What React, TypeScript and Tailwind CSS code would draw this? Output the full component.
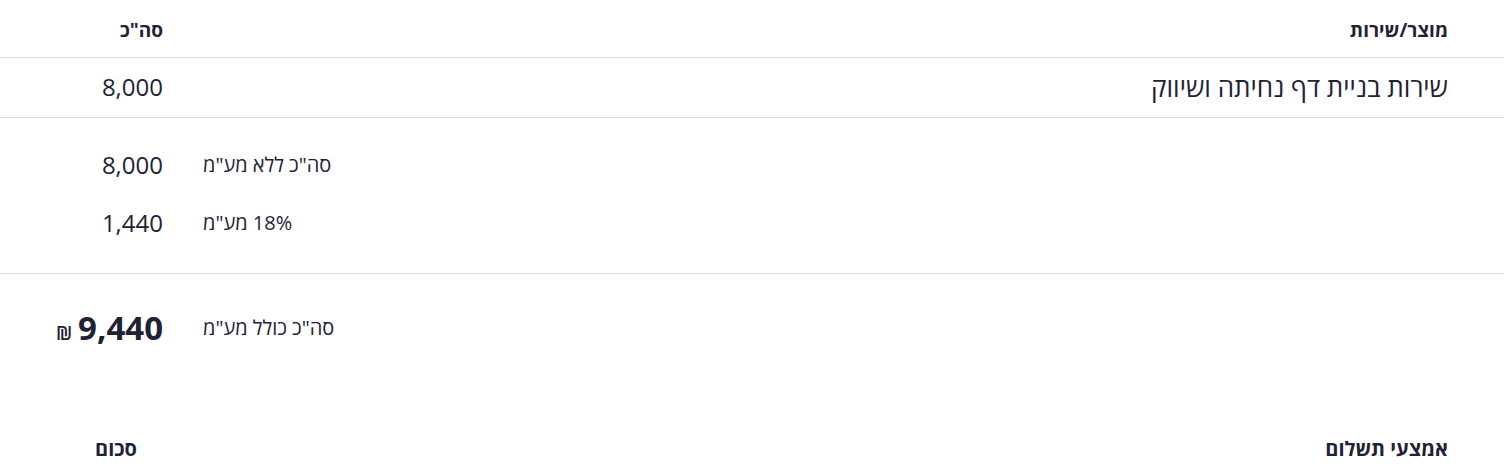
export default function App() {
  const font = { fontFamily: '"Open Sans", "DejaVu Sans", sans-serif' };
  return (
    <div dir="rtl" className="w-[1504px] bg-white text-[#1f2235]" style={font}>
      {/* items table */}
      <div className="flex items-center justify-between border-b border-[#dedede] px-14 pt-[18px] pb-[15px]">
        <span className="text-[19px] font-bold leading-6">מוצר/שירות</span>
        <span className="w-[107px] text-[19px] font-bold leading-6">סה"כ</span>
      </div>
      <div className="flex items-center justify-between border-b border-[#dedede] px-14 pt-[14px] pb-[15px]">
        <span className="text-[26px] leading-[30px]">שירות בניית דף נחיתה ושיווק</span>
        <span className="w-[107px] text-[24px] font-medium leading-[30px]">8,000</span>
      </div>

      {/* summary */}
      <div className="flex flex-col gap-[30px] border-b border-[#dedede] px-14 pt-[33px] pb-[36px]">
        <div className="flex items-center justify-end gap-10">
          <span className="text-[20px] leading-7">סה"כ ללא מע"מ</span>
          <span className="w-[107px] text-[24px] font-medium leading-7">8,000</span>
        </div>
        <div className="flex items-center justify-end gap-10">
          <span className="text-[20px] leading-7">18% מע"מ</span>
          <span className="w-[107px] text-[24px] font-medium leading-7">1,440</span>
        </div>
      </div>
      <div className="flex items-center justify-end gap-10 px-14 pt-[34px]">
        <span className="text-[20px] leading-10">סה"כ כולל מע"מ</span>
        <span className="flex w-[107px] items-baseline gap-1.5">
          <span className="text-[33px] font-bold leading-10">9,440</span>
          <span className="text-[19px] font-semibold">₪</span>
        </span>
      </div>

      {/* payments */}
      <div className="flex items-center justify-between px-14 pt-[89px] pb-6">
        <span className="text-[20px] font-bold leading-6">אמצעי תשלום</span>
        <span className="w-[107px] pr-[26px] text-[20px] font-bold leading-6">סכום</span>
      </div>
    </div>
  );
}
